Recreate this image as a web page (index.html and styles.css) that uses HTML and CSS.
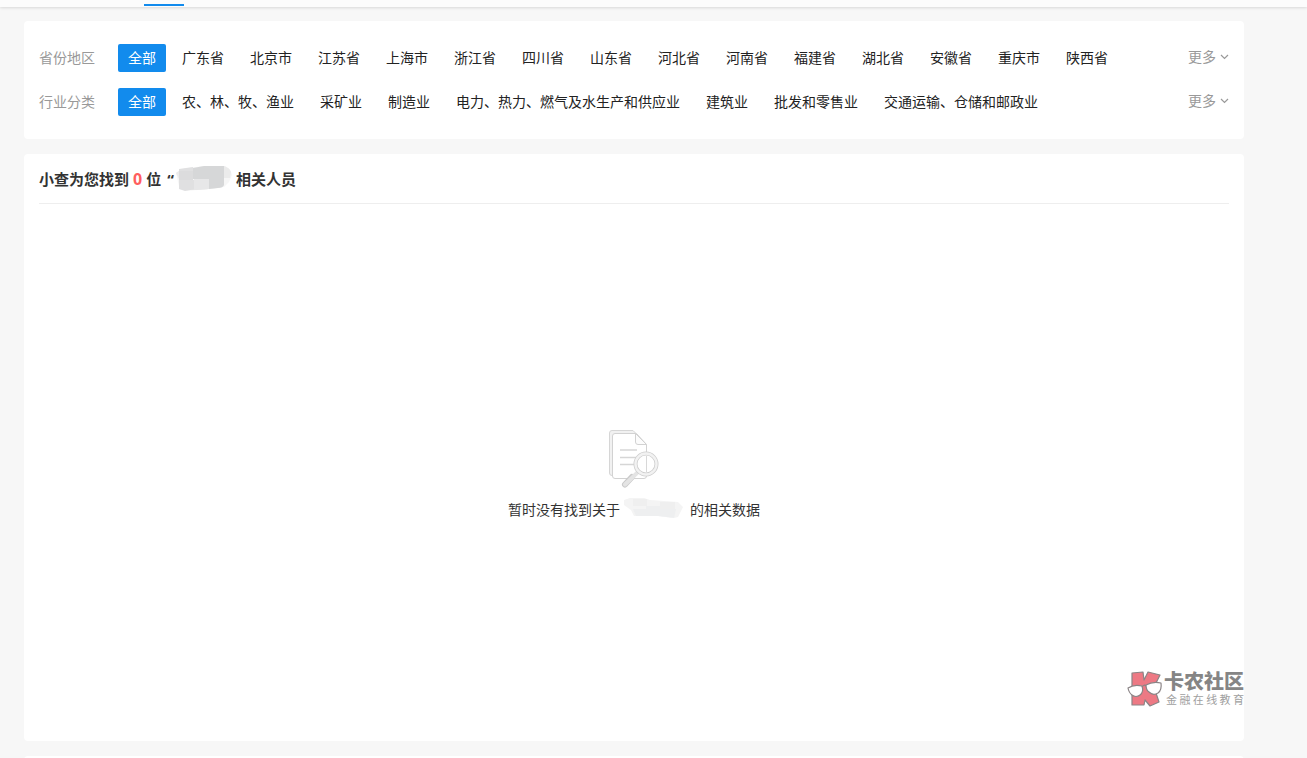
FILE: index.html
```
<!DOCTYPE html>
<html lang="zh-CN">
<head>
<meta charset="utf-8">
<title>相关人员</title>
<link rel="stylesheet" href="styles.css">
</head>
<body>
<header class="topbar"><span class="topbar-active"></span></header>
<main class="content">
  <section class="card filters">
    <div class="filter-row">
      <span class="filter-label">省份地区</span>
      <nav class="filter-options">
        <a class="option selected" href="#">全部</a>
        <a class="option" href="#">广东省</a>
        <a class="option" href="#">北京市</a>
        <a class="option" href="#">江苏省</a>
        <a class="option" href="#">上海市</a>
        <a class="option" href="#">浙江省</a>
        <a class="option" href="#">四川省</a>
        <a class="option" href="#">山东省</a>
        <a class="option" href="#">河北省</a>
        <a class="option" href="#">河南省</a>
        <a class="option" href="#">福建省</a>
        <a class="option" href="#">湖北省</a>
        <a class="option" href="#">安徽省</a>
        <a class="option" href="#">重庆市</a>
        <a class="option" href="#">陕西省</a>
      </nav>
      <button class="more" type="button">更多<svg class="chevron" viewBox="0 0 9 6" aria-hidden="true"><path d="M1 1l3.500 3.500L8 1"/></svg></button>
    </div>
    <div class="filter-row">
      <span class="filter-label">行业分类</span>
      <nav class="filter-options">
        <a class="option selected" href="#">全部</a>
        <a class="option" href="#">农、林、牧、渔业</a>
        <a class="option" href="#">采矿业</a>
        <a class="option" href="#">制造业</a>
        <a class="option" href="#">电力、热力、燃气及水生产和供应业</a>
        <a class="option" href="#">建筑业</a>
        <a class="option" href="#">批发和零售业</a>
        <a class="option" href="#">交通运输、仓储和邮政业</a>
      </nav>
      <button class="more" type="button">更多<svg class="chevron" viewBox="0 0 9 6" aria-hidden="true"><path d="M1 1l3.500 3.500L8 1"/></svg></button>
    </div>
  </section>

  <section class="card results">
    <h1 class="results-title">
      <span>小查为您找到</span>
      <em class="count">0</em>
      <span>位</span>
      <span class="quote">“</span>
      <svg class="title-mask" viewBox="0 0 56 27" aria-hidden="true">
        <path fill="#f6f6f6" d="M0 8L5 4 28 1 49 1Q55 4 56 10L53 17 48 22 35 24 9 26 3 21z"/>
        <path fill="#e0e0e1" d="M3 4L17 2V15H33V24L14 25 9 26 3 24z"/>
        <path fill="#e7e7e8" d="M18 14H33V24L18 25z"/>
        <path fill="#d6d7d8" d="M17 3L28 1H48V20Q47 23 42 23L33 24V14H17z"/>
        <path fill="#ebebeb" d="M48 1Q54 3 55 7L54 13H48zM0 8L3 6V14z"/>
        <path fill="#dcdcdd" d="M3 6H17V15H3z"/>
      </svg>
      <span>相关人员</span>
    </h1>
    <div class="empty">
      <svg class="empty-icon" viewBox="0 0 50 60" aria-hidden="true">
        <path fill="#f1f1f1" stroke="#d6d6d6" d="M5 45.500H3Q.5 45.500.500 43V3Q.5.500 3 .500H24L27 3.500"/>
        <path fill="#fff" stroke="#d2d2d2" d="M6 3.500H27.500L37.500 14.500V46Q37.500 48.500 35 48.500H6Q3.500 48.500 3.500 46V6Q3.500 3.500 6 3.500z"/>
        <path fill="#fcfcfc" stroke="#d2d2d2" d="M26.500 3.500V12Q26.500 14.500 29 14.500H37.500z"/>
        <path fill="none" stroke="#d6d6d6" stroke-width="1.500" d="M11 20H28M11 27.500H27M11 34.500H25"/>
        <path stroke="#cacaca" stroke-width="6" stroke-linecap="round" d="M16 54.500L23 47"/>
        <path stroke="#e4e4e4" stroke-width="4" stroke-linecap="round" d="M16 54.500L28 43"/>
        <circle cx="37" cy="34" r="10.500" fill="#fff" stroke="#cecece" stroke-width="4"/>
        <circle cx="37" cy="34" r="10.500" fill="none" stroke="#f2f2f2" stroke-width="2.400"/>
        <path stroke="#d8d8d8" d="M37.500 26V42"/>
      </svg>
      <p class="empty-text">
        <span>暂时没有找到关于</span>
        <svg class="text-mask" viewBox="0 0 60 21" aria-hidden="true">
          <path fill="#f4f4f4" d="M0 2L6 0H20L26 2 54 4 59 9 54 19 50 20 34 18 10 18 7 12 0 7z"/>
          <path fill="#eeeff0" d="M9 11H22V8H36V11H52L50 20 34 18H12z"/>
          <path fill="#efefef" d="M9 1H23V8H9zM36 4H51V11H36z"/>
        </svg>
        <span>的相关数据</span>
      </p>
    </div>
    <div class="watermark">
      <svg class="watermark-logo" viewBox="0 0 36 38" aria-hidden="true">
        <path fill="#ed7984" stroke="#8b8486" stroke-width="1.200" stroke-linejoin="round" d="M5 3L16 2 17 10 21 2 33 5 27 17 32 32 23 36 18 30 17 35H5z"/>
        <g fill="#fff" stroke="#8b8486" stroke-width="1.200" stroke-linejoin="round">
          <path d="M1 18Q7 14 15 16Q17 22 13 25Q9 28 5 25Q2 23 1 18z"/>
          <path d="M19 15Q26 11 34 13Q35 20 31 23Q26 26 22 22Q19 20 19 15z"/>
          <path fill="none" d="M15 17Q17 14 19 16"/>
        </g>
      </svg>
      <div class="watermark-words">
        <span class="watermark-name">卡农社区</span>
        <span class="watermark-slogan">金融在线教育</span>
      </div>
    </div>
  </section>

  <section class="card next-card"></section>
</main>
</body>
</html>
```
FILE: styles.css
```
* {
  box-sizing: border-box;
}

body {
  display: flex;
  flex-direction: column;
  height: 100vh;
  margin: 0;
  overflow: hidden;
  background: #f7f7f7;
  color: #222;
  font: 14px/20px "Open Sans", "Noto Sans CJK SC", sans-serif;
}

.topbar {
  flex: none;
  height: 7px;
  padding: 4px 0 0 144px;
  background: #fcfcfc;
  box-shadow: 0 1px 3px rgba(0, 0, 0, 0.12);
}

.topbar-active {
  display: block;
  width: 40px;
  height: 2px;
  background: #128bed;
}

.content {
  flex: 1;
  display: flex;
  flex-direction: column;
  gap: 15px;
  margin: 14px 63px 0 24px;
}

.card {
  background: #fff;
  border-radius: 4px;
}

.filters {
  display: flex;
  flex-direction: column;
  gap: 16px;
  padding: 23px 15px;
}

.filter-row {
  display: flex;
  align-items: flex-start;
}

.filter-label {
  flex: none;
  width: 79px;
  line-height: 28px;
  color: #999;
}

.filter-options {
  flex: 1;
  display: flex;
  flex-wrap: wrap;
  gap: 6px;
}

.option {
  padding: 0 10px;
  border-radius: 2px;
  line-height: 28px;
  color: #222;
  text-decoration: none;
}

.selected {
  background: #128bed;
  color: #fff;
}

.more {
  display: flex;
  align-items: center;
  gap: 4px;
  padding: 0;
  border: 0;
  background: none;
  color: #999;
  font: inherit;
  line-height: 26px;
}

.chevron {
  width: 9px;
  height: 6px;
  fill: none;
  stroke: #999;
  stroke-width: 1.2;
}

.results {
  position: relative;
  flex: 1;
  display: flex;
  flex-direction: column;
  padding: 0 15px;
}

.results-title {
  display: flex;
  align-items: center;
  height: 50px;
  margin: 0;
  border-bottom: 1px solid #eee;
  font-size: 15px;
  line-height: 24px;
  color: #333;
}

.count {
  margin: 0 4px;
  font-size: 16px;
  font-style: normal;
  color: #ff5e5e;
}

.quote {
  margin-left: 6px;
}

.title-mask {
  width: 56px;
  height: 27px;
  margin: 0 4px 0 2px;
}

.empty {
  flex: 1;
  display: flex;
  flex-direction: column;
  align-items: center;
  justify-content: center;
  gap: 8px;
  padding-top: 6px;
}

.empty-icon {
  width: 50px;
  height: 60px;
}

.empty-text {
  display: flex;
  align-items: center;
  margin: 0;
  color: #333;
}

.text-mask {
  width: 60px;
  height: 21px;
  margin: 0 6px 2px 4px;
}

.watermark {
  position: absolute;
  right: 0;
  bottom: 33px;
  display: flex;
  align-items: center;
}

.watermark-logo {
  width: 36px;
  height: 38px;
}

.watermark-words {
  display: flex;
  flex-direction: column;
  width: 80px;
  margin-left: 1px;
  color: #858585;
  font-family: "Liberation Sans", "Noto Sans CJK SC", sans-serif;
}

.watermark-name {
  font-size: 20px;
  font-weight: 900;
  line-height: 22px;
}

.watermark-slogan {
  padding-left: 2px;
  font-size: 11px;
  line-height: 14px;
  color: #a0a0a0;
  text-align-last: justify;
}

.next-card {
  flex: none;
  height: 10px;
  margin-bottom: -8px;
}
```
